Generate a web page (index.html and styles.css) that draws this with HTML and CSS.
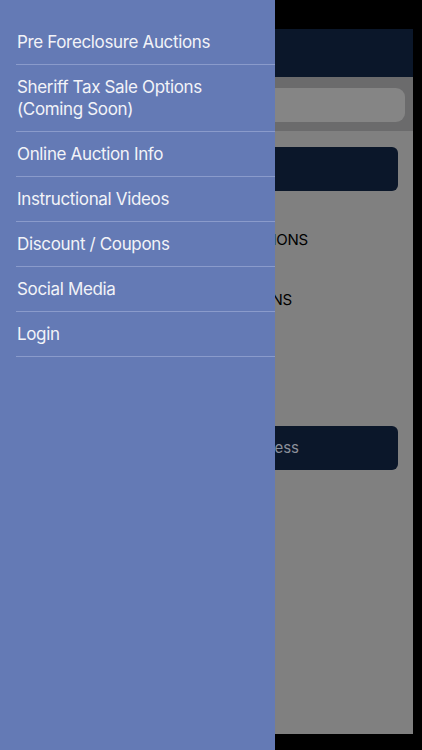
FILE: index.html
```html
<!DOCTYPE html>
<html>
<head>
<meta charset="utf-8">
<link rel="stylesheet" href="styles.css">
</head>
<body>
<div class="screen">
  <div class="app">
    <div class="app-header"></div>
    <div class="search-bar"><div class="search-field"></div></div>
    <div class="app-body">
      <div class="btn-dark"></div>
      <div class="line line-1">IONS</div>
      <div class="line line-2">NS</div>
      <div class="btn-dark btn-access">cess</div>
    </div>
  </div>
  <nav class="drawer">
    <ul class="menu">
      <li>Pre Foreclosure Auctions</li>
      <li>Sheriff Tax Sale Options<br>(Coming Soon)</li>
      <li>Online Auction Info</li>
      <li>Instructional Videos</li>
      <li>Discount / Coupons</li>
      <li>Social Media</li>
      <li>Login</li>
    </ul>
  </nav>
</div>
</body>
</html>
```

FILE: styles.css
```css
html, body {
  margin: 0;
  padding: 0;
  background: #000;
}
.screen {
  position: relative;
  width: 422px;
  height: 750px;
  overflow: hidden;
  background: #000;
  font-family: "Inter", "Liberation Sans", sans-serif;
}
.app {
  margin: 29px 0 0 9px;
  width: 404px;
  height: 705px;
  background: #808080;
  display: flex;
  flex-direction: column;
}
.app-header {
  height: 48px;
  background: #0b172a;
}
.search-bar {
  height: 54px;
  background: #6b6b6c;
  padding: 11px 8px 9px 8px;
  box-sizing: border-box;
}
.search-field {
  height: 34px;
  border-radius: 9px;
  background: #858585;
}
.app-body {
  padding: 16px 15px 0 15px;
  display: flex;
  flex-direction: column;
}
.btn-dark {
  height: 44px;
  border-radius: 6px;
  background: #0b172a;
}
.line {
  font-size: 15px;
  color: #000;
  text-align: right;
  height: 20px;
  line-height: 20px;
  letter-spacing: -0.2px;
}
.line-1 {
  margin-top: 39px;
  width: 284px;
}
.line-2 {
  margin-top: 40px;
  width: 268px;
}
.btn-access {
  margin-top: 116px;
  line-height: 44px;
  font-size: 15px;
  color: #8b909a;
  text-align: right;
  padding-right: 99px;
}
.drawer {
  position: absolute;
  left: 0;
  top: 0;
  width: 275px;
  height: 750px;
  background: #647ab5;
}
.menu {
  list-style: none;
  margin: 0;
  padding: 20px 0 0 16px;
}
.menu li {
  font-size: 17px;
  line-height: 22px;
  letter-spacing: -0.35px;
  padding: 11px 0 11px 1px;
  color: #f2f3f8;
  border-bottom: 1px solid #8a9bcb;
}
```
